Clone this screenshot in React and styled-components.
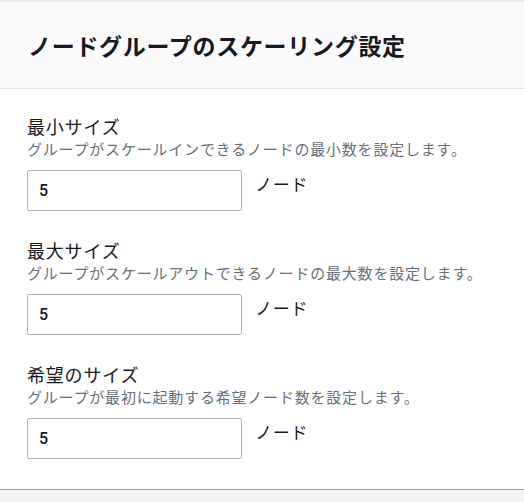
import React from 'react'
import styled, { createGlobalStyle } from 'styled-components'

const GlobalStyle = createGlobalStyle`
    html, body {
        margin: 0;
        padding: 0;
        background: #f2f3f3;
    }
    body {
        font-family: "Noto Sans CJK JP", "Noto Sans", sans-serif;
        color: #16191f;
    }
`

const fields = [
    { label: '最小サイズ', help: 'グループがスケールインできるノードの最小数を設定します。', value: '5' },
    { label: '最大サイズ', help: 'グループがスケールアウトできるノードの最大数を設定します。', value: '5' },
    { label: '希望のサイズ', help: 'グループが最初に起動する希望ノード数を設定します。', value: '5' },
]

function App() {
    return (
        <>
            <GlobalStyle />
            <Panel>
                <Header>
                    <Title>ノードグループのスケーリング設定</Title>
                </Header>
                <Body>
                    {fields.map((f) => (
                        <Field key={f.label}>
                            <Label>{f.label}</Label>
                            <Help>{f.help}</Help>
                            <Control>
                                <Input type="text" defaultValue={f.value} />
                                <Suffix>ノード</Suffix>
                            </Control>
                        </Field>
                    ))}
                </Body>
            </Panel>
        </>
    )
}

export default App

const Panel = styled.section`
    width: 524px;
    background: #ffffff;
    border-top: 2px solid #eaeded;
    border-bottom: 1px solid #95a5a6;
`
const Header = styled.header`
    height: 87px;
    display: flex;
    align-items: center;
    padding: 0 28px;
    background: #fafafa;
    border-bottom: 1px solid #e4e7e7;
    box-sizing: border-box;
`
const Title = styled.h2`
    margin: 0;
    font-size: 23px;
    line-height: 28px;
    font-weight: 700;
    color: #16191f;
    letter-spacing: 0.7px;
`
const Body = styled.div`
    display: flex;
    flex-direction: column;
    gap: 28px;
    padding: 26px 26px 30px 27px;
`
const Field = styled.div`
    display: flex;
    flex-direction: column;
`
const Label = styled.div`
    font-size: 18px;
    line-height: 22px;
    letter-spacing: 0.8px;
    color: #16191f;
`
const Help = styled.div`
    font-size: 15px;
    line-height: 24px;
    letter-spacing: 0.8px;
    color: #687078;
`
const Control = styled.div`
    display: flex;
    align-items: flex-start;
    gap: 13px;
    margin-top: 9px;
`
const Input = styled.input`
    width: 215px;
    height: 41px;
    box-sizing: border-box;
    padding: 0 11px;
    border: 1px solid #aab7b8;
    border-radius: 2px;
    font-family: Roboto, "Noto Sans", sans-serif;
    font-size: 16px;
    font-weight: 500;
    color: #16191f;
    background: #ffffff;
    outline: none;
`
const Suffix = styled.span`
    font-size: 17px;
    line-height: 28px;
    letter-spacing: 0.8px;
    color: #16191f;
`
